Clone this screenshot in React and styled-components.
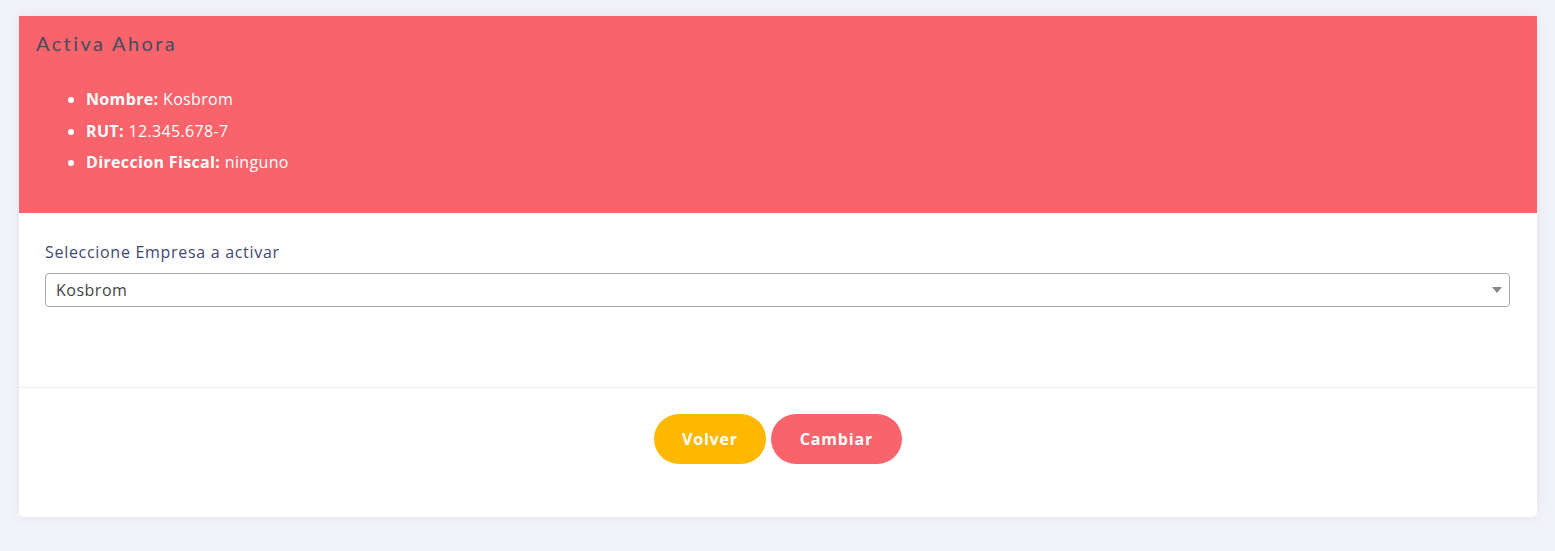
import React, { useState } from "react";
import styled, { createGlobalStyle } from "styled-components";

const GlobalStyle = createGlobalStyle`
  html, body {
    margin: 0;
    padding: 0;
    background-color: #f2f3f8;
    font-family: "Open Sans", "Noto Sans", sans-serif;
  }
  * {
    box-sizing: border-box;
  }
`;

const Page = styled.div`
  padding: 16px 18px 34px 19px;
`;

const Card = styled.div`
  background-color: #ffffff;
  border-radius: 0 0 5px 5px;
  box-shadow: 0 0 13px rgba(82, 63, 105, 0.08);
  overflow: hidden;
`;

const Header = styled.div`
  background-color: #f9646c;
  height: 197px;
  padding: 15px 17px 0 17px;
`;

const Title = styled.h3`
  margin: 0;
  font-family: "Lato", "Noto Sans", sans-serif;
  font-weight: 400;
  font-size: 20px;
  letter-spacing: 2.4px;
  line-height: 24px;
  color: #464c5c;
`;

const InfoList = styled.ul`
  margin: 29px 0 0 0;
  padding-left: 50px;
  color: #ffffff;
  font-size: 16px;
  line-height: 31.5px;
  letter-spacing: 0.35px;
`;

const Body = styled.div`
  padding: 28px 27px 80px 26px;
  border-bottom: 1px solid #ebedf2;
`;

const Label = styled.label`
  display: block;
  font-size: 16px;
  line-height: 22px;
  letter-spacing: 0.7px;
  color: #3f4870;
  margin-bottom: 10px;
`;

const SelectWrap = styled.div`
  position: relative;
`;

const Select = styled.select`
  width: 100%;
  height: 34px;
  appearance: none;
  border: 1px solid #aaaaaa;
  border-radius: 4px;
  background: #fff;
  padding: 0 30px 0 10px;
  font-family: "Open Sans", "Noto Sans", sans-serif;
  font-size: 16px;
  letter-spacing: 0.5px;
  color: #444;
  outline: none;
`;

const Arrow = styled.span`
  position: absolute;
  right: 8px;
  top: 14px;
  width: 0;
  height: 0;
  border-left: 5px solid transparent;
  border-right: 5px solid transparent;
  border-top: 6px solid #888;
  pointer-events: none;
`;

const Footer = styled.div`
  display: flex;
  justify-content: center;
  gap: 5px;
  padding: 26px 0 53px 0;
`;

const Button = styled.button`
  height: 50px;
  border: none;
  border-radius: 25px;
  padding: 0 ${(p) => p.$px}px;
  background-color: ${(p) => p.$bg};
  color: #ffffff;
  font-family: "Open Sans", "Noto Sans", sans-serif;
  font-weight: 700;
  font-size: 16px;
  letter-spacing: 0.8px;
  cursor: pointer;
`;

export default function App() {
  const [empresa, setEmpresa] = useState("kosbrom");
  return (
    <Page>
      <GlobalStyle />
      <Card>
        <Header>
          <Title>Activa Ahora</Title>
          <InfoList>
            <li>
              <strong>Nombre:</strong> Kosbrom
            </li>
            <li>
              <strong>RUT:</strong> 12.345.678-7
            </li>
            <li>
              <strong>Direccion Fiscal:</strong> ninguno
            </li>
          </InfoList>
        </Header>
        <Body>
          <Label>Seleccione Empresa a activar</Label>
          <SelectWrap>
            <Select value={empresa} onChange={(e) => setEmpresa(e.target.value)}>
              <option value="kosbrom">Kosbrom</option>
            </Select>
            <Arrow />
          </SelectWrap>
        </Body>
        <Footer>
          <Button $bg="#ffb800" $px={28}>Volver</Button>
          <Button $bg="#f9646c" $px={29}>Cambiar</Button>
        </Footer>
      </Card>
    </Page>
  );
}
